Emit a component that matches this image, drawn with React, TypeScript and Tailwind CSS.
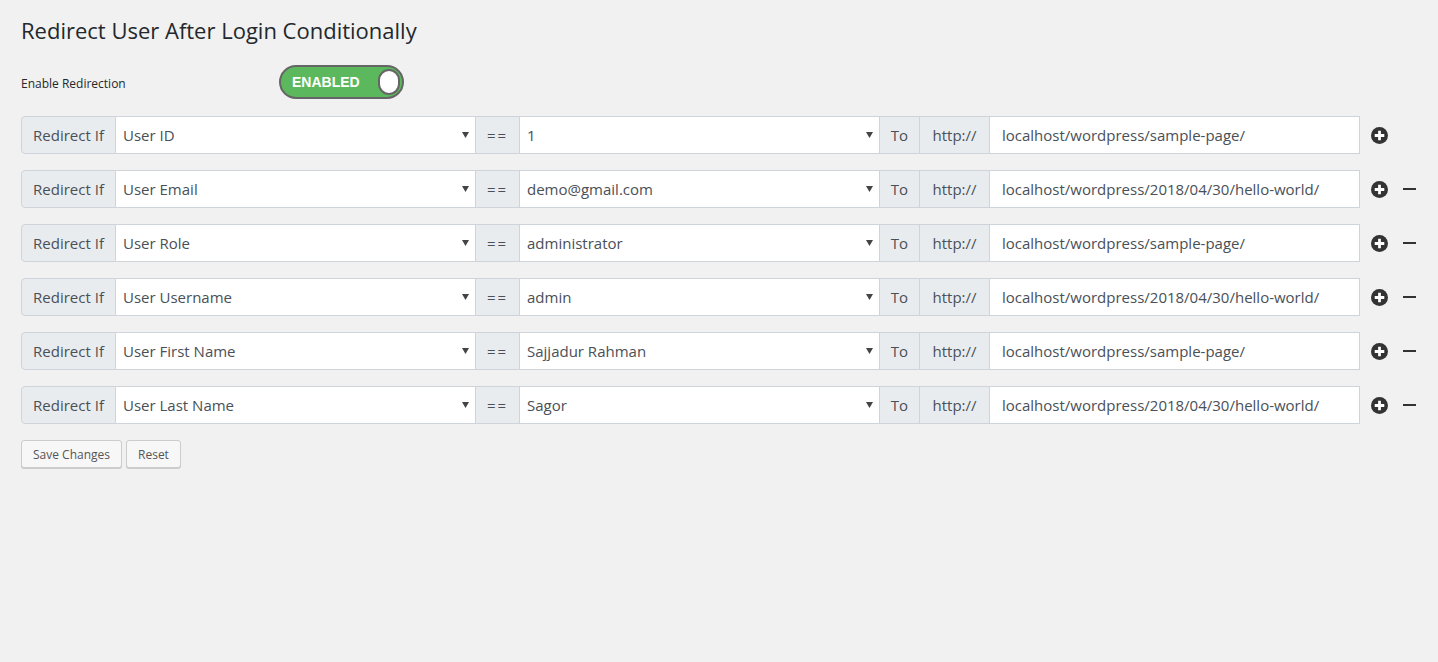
const rules = [
  { field: "User ID", value: "1", url: "localhost/wordpress/sample-page/", first: true },
  { field: "User Email", value: "demo@gmail.com", url: "localhost/wordpress/2018/04/30/hello-world/" },
  { field: "User Role", value: "administrator", url: "localhost/wordpress/sample-page/" },
  { field: "User Username", value: "admin", url: "localhost/wordpress/2018/04/30/hello-world/" },
  { field: "User First Name", value: "Sajjadur Rahman", url: "localhost/wordpress/sample-page/" },
  { field: "User Last Name", value: "Sagor", url: "localhost/wordpress/2018/04/30/hello-world/" },
];

function Caret() {
  return (
    <svg width="7" height="6" viewBox="0 0 7 6" className="shrink-0">
      <path d="M0 0h7L3.5 6z" fill="#444" />
    </svg>
  );
}

function PlusIcon() {
  return (
    <svg width="17" height="17" viewBox="0 0 16 16">
      <circle cx="8" cy="8" r="8" fill="#333" />
      <path d="M8 3.5v9M3.5 8h9" stroke="#fff" strokeWidth="2.6" />
    </svg>
  );
}

function RuleRow({ field, value, url, first }: { field: string; value: string; url: string; first?: boolean }) {
  const addon = "flex items-center justify-center bg-[#e9ecef] border border-[#ced4da] text-[#495057] h-[38px]";
  return (
    <div className="flex items-center">
      <div className="flex w-[1339px] text-[15px] text-[#495057]">
        <div className={`${addon} w-[95px] rounded-l-[4px]`}>Redirect If</div>
        <div className="flex items-center justify-between w-[359px] h-[38px] bg-white border-y border-[#ced4da] pl-[7px] pr-[6px]">
          <span className="pt-[1px]">{field}</span>
          <Caret />
        </div>
        <div className={`${addon} w-[45px] tracking-[2px]`}>==</div>
        <div className="flex items-center justify-between w-[359px] h-[38px] bg-white border-y border-[#ced4da] pl-[7px] pr-[6px]">
          <span className="pt-[1px]">{value}</span>
          <Caret />
        </div>
        <div className={`${addon} w-[40px] border-r-0`}>To</div>
        <div className={`${addon} w-[71px]`}>http://</div>
        <div className="flex items-center flex-1 h-[38px] bg-white border border-l-0 border-[#ced4da] pl-[12px]">
          {url}
        </div>
      </div>
      <div className="flex items-center gap-[15px] ml-[11px]">
        <PlusIcon />
        {!first && <div className="w-[13px] h-[2px] bg-[#333]" />}
      </div>
    </div>
  );
}

export default function App() {
  return (
    <div className="min-h-screen bg-[#f1f1f1] px-[21px] pt-[16px] font-['Open_Sans',sans-serif] text-[#23282d]">
      <h1 className="text-[22px] leading-[28px] font-normal">Redirect User After Login Conditionally</h1>

      <div className="flex items-center mt-[21px]">
        <span className="w-[258px] text-[12px] pt-[3px]">Enable Redirection</span>
        <div className="flex items-center justify-between w-[125px] h-[34px] rounded-full bg-[#5cb85c] border-2 border-[#666] pl-[11px] pr-[2px]">
          <span className="font-['Liberation_Sans',sans-serif] font-bold text-[14px] text-white">ENABLED</span>
          <div className="w-[22px] h-[26px] rounded-full bg-white border-2 border-[#666]" />
        </div>
      </div>

      <div className="flex flex-col gap-[16px] mt-[17px]">
        {rules.map((r) => (
          <RuleRow key={r.field} {...r} />
        ))}
      </div>

      <div className="flex gap-[4px] mt-[16px]">
        <button className="h-[28px] px-[11px] bg-[#f7f7f7] border border-[#ccc] rounded-[3px] shadow-[0_1px_0_#ccc] text-[12px] text-[#555] pt-[1px]">
          Save Changes
        </button>
        <button className="h-[28px] px-[11px] bg-[#f7f7f7] border border-[#ccc] rounded-[3px] shadow-[0_1px_0_#ccc] text-[12px] text-[#555] pt-[1px]">
          Reset
        </button>
      </div>
    </div>
  );
}
